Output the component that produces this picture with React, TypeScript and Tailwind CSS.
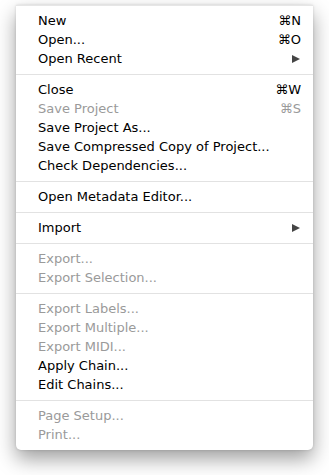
import React from "react";

type Item =
  | { type: "sep" }
  | { type: "item"; label: string; disabled?: boolean; shortcut?: string; submenu?: boolean };

const items: Item[] = [
  { type: "item", label: "New", shortcut: "⌘N" },
  { type: "item", label: "Open...", shortcut: "⌘O" },
  { type: "item", label: "Open Recent", submenu: true },
  { type: "sep" },
  { type: "item", label: "Close", shortcut: "⌘W" },
  { type: "item", label: "Save Project", shortcut: "⌘S", disabled: true },
  { type: "item", label: "Save Project As..." },
  { type: "item", label: "Save Compressed Copy of Project..." },
  { type: "item", label: "Check Dependencies..." },
  { type: "sep" },
  { type: "item", label: "Open Metadata Editor..." },
  { type: "sep" },
  { type: "item", label: "Import", submenu: true },
  { type: "sep" },
  { type: "item", label: "Export...", disabled: true },
  { type: "item", label: "Export Selection...", disabled: true },
  { type: "sep" },
  { type: "item", label: "Export Labels...", disabled: true },
  { type: "item", label: "Export Multiple...", disabled: true },
  { type: "item", label: "Export MIDI...", disabled: true },
  { type: "item", label: "Apply Chain..." },
  { type: "item", label: "Edit Chains..." },
  { type: "sep" },
  { type: "item", label: "Page Setup...", disabled: true },
  { type: "item", label: "Print...", disabled: true },
];

function Arrow() {
  return (
    <svg width="8" height="8" viewBox="0 0 8 8" className="mr-[1px]">
      <polygon points="0,0 8,4 0,8" fill="#454545" />
    </svg>
  );
}

export default function App() {
  return (
    <div className="w-[329px] h-[475px] bg-white pt-[5px] pl-[16px]">
      <div
        className="w-[297px] bg-white rounded-b-[5px] pt-[5px] pb-[6px] border-t border-[#e6e6e6] shadow-[0_9px_20px_rgba(0,0,0,0.38),0_0_3px_rgba(0,0,0,0.15)]"
        style={{ fontFamily: '"DejaVu Sans", sans-serif' }}
      >
        {items.map((it, i) =>
          it.type === "sep" ? (
            <div key={i} className="h-[12px] flex items-center">
              <div className="h-px w-full bg-[#e2e2e2]" />
            </div>
          ) : (
            <div
              key={i}
              className={`h-[19px] flex items-center justify-between pl-[22px] pr-[12px] text-[13px] leading-none ${
                it.disabled ? "text-[#9a9a9a]" : "text-black"
              }`}
            >
              <span>{it.label}</span>
              {it.shortcut ? <span>{it.shortcut}</span> : it.submenu ? <Arrow /> : null}
            </div>
          )
        )}
      </div>
    </div>
  );
}
